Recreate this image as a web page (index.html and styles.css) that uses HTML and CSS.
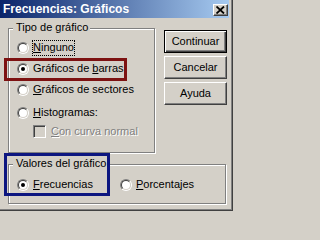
FILE: index.html
```html
<!DOCTYPE html>
<html lang="es">
<head>
<meta charset="utf-8">
<title>Frecuencias: Gráficos</title>
<link rel="stylesheet" href="styles.css">
</head>
<body>
<div class="window">
  <div class="titlebar">
    <span class="title">Frecuencias: Gráficos</span>
    <span class="close"><svg width="9" height="8" viewBox="0 0 9 8"><path d="M0.5 0.5 L8 7.5 M8 0.5 L0.5 7.5" stroke="#000" stroke-width="1.8" fill="none"/></svg></span>
  </div>
  <div class="client">
    <div class="top-row">
      <div class="group group-type">
        <span class="group-label">Tipo de gráfico</span>
        <div class="option"><span class="radio"></span><span class="label focus"><u>N</u>inguno</span></div>
        <div class="option"><span class="radio checked"></span><span class="label">Gráficos de <u>b</u>arras</span></div>
        <div class="option"><span class="radio"></span><span class="label"><u>G</u>ráficos de sectores</span></div>
        <div class="option option-hist"><span class="radio"></span><span class="label"><u>H</u>istogramas:</span></div>
        <div class="option option-check"><span class="checkbox"></span><span class="label disabled"><u>C</u>on curva normal</span></div>
      </div>
      <div class="buttons">
        <div class="btn btn-default">Continuar</div>
        <div class="btn">Cancelar</div>
        <div class="btn">Ayuda</div>
      </div>
    </div>
    <div class="group group-values">
      <span class="group-label">Valores del gráfico</span>
      <div class="values-row">
        <div class="option option-first"><span class="radio checked"></span><span class="label"><u>F</u>recuencias</span></div>
        <div class="option"><span class="radio"></span><span class="label"><u>P</u>orcentajes</span></div>
      </div>
    </div>
  </div>
  <div class="mark mark-red"></div>
  <div class="mark mark-blue"></div>
</div>
</body>
</html>
```
FILE: styles.css
```css
html, body {
  margin: 0;
  padding: 0;
  background: #d4d0c8;
}

body {
  width: 233px;
  height: 211px;
  overflow: hidden;
  font-family: "Liberation Sans", Arial, sans-serif;
  font-size: 11px;
  color: #000;
}

.window {
  position: relative;
  width: 233px;
  height: 211px;
  box-sizing: border-box;
  padding-right: 4px;
  background: #d4d0c8;
  box-shadow: inset -1px -1px 0 #404040, inset -2px -2px 0 #808080;
  display: flex;
  flex-direction: column;
}

.titlebar {
  height: 18px;
  display: flex;
  align-items: center;
  justify-content: space-between;
  background: linear-gradient(to right, #0a246a, #a6caf0);
}

.title {
  padding-left: 3px;
  color: #fff;
  font-weight: bold;
  font-size: 12px;
  line-height: 18px;
  white-space: nowrap;
}

.close {
  width: 15px;
  height: 12px;
  margin-right: 1px;
  margin-top: 1px;
  box-sizing: border-box;
  background: #d4d0c8;
  border: 1px solid;
  border-color: #fff #404040 #404040 #fff;
  box-shadow: inset -1px -1px 0 #808080;
  display: flex;
  align-items: center;
  justify-content: center;
}

.close svg {
  display: block;
  margin-left: -1px;
}

.client {
  display: flex;
  flex-direction: column;
}

.top-row {
  display: flex;
  align-items: flex-start;
}

.group {
  position: relative;
  box-sizing: border-box;
  margin-left: 8px;
  border: 1px solid #808080;
  box-shadow: inset 1px 1px 0 #fff, 1px 1px 0 #fff;
}

.group-label {
  position: absolute;
  left: 4px;
  top: -8px;
  padding: 0 2px 0 3px;
  line-height: 13px;
  background: #d4d0c8;
  white-space: nowrap;
}

.group-type {
  width: 147px;
  height: 125px;
  margin-top: 10px;
  padding: 8px 0 0 8px;
  display: flex;
  flex-direction: column;
}

.option {
  display: flex;
  align-items: center;
  height: 21px;
  white-space: nowrap;
}

.option-hist {
  margin-top: 2px;
}

.option-check {
  height: 17px;
  padding-left: 16px;
}

.radio {
  position: relative;
  flex: none;
  width: 12px;
  height: 12px;
  box-sizing: border-box;
  border-radius: 50%;
  border: 1px solid;
  border-color: #808080 #fff #fff #808080;
}

.radio::before {
  content: "";
  position: absolute;
  inset: 0;
  border-radius: 50%;
  border: 1px solid;
  border-color: #404040 #d4d0c8 #d4d0c8 #404040;
  background: #fff;
}

.radio.checked::after {
  content: "";
  position: absolute;
  left: 3px;
  top: 3px;
  width: 4px;
  height: 4px;
  border-radius: 50%;
  background: #000;
}

.checkbox {
  flex: none;
  width: 13px;
  height: 13px;
  box-sizing: border-box;
  border: 1px solid;
  border-color: #808080 #fff #fff #808080;
  box-shadow: inset 1px 1px 0 #404040, inset -1px -1px 0 #d4d0c8;
  background: #d4d0c8;
}

.label {
  margin-left: 4px;
  line-height: 13px;
}

.option-check .label {
  margin-left: 5px;
}

.label u {
  text-decoration: underline;
  text-underline-offset: 1px;
}

.label.focus {
  outline: 1px dotted #000;
  outline-offset: 0;
  padding-bottom: 1px;
}

.label.disabled {
  color: #808080;
  text-shadow: 1px 1px 0 #fff;
}

.buttons {
  margin-left: 9px;
  margin-top: 12px;
  display: flex;
  flex-direction: column;
  gap: 3px;
}

.btn {
  width: 63px;
  height: 23px;
  box-sizing: border-box;
  border: 1px solid;
  border-color: #fff #404040 #404040 #fff;
  box-shadow: inset -1px -1px 0 #808080;
  display: flex;
  align-items: center;
  justify-content: center;
  line-height: 13px;
}

.btn-default {
  border-color: #000;
  box-shadow: inset 1px 1px 0 #fff, inset -1px -1px 0 #404040, inset -2px -2px 0 #808080;
}

.group-values {
  width: 218px;
  height: 40px;
  margin-top: 11px;
  padding: 9px 0 0 8px;
}

.values-row {
  display: flex;
}

.option-first {
  width: 103px;
}

.mark {
  position: absolute;
  box-sizing: border-box;
  border: 3px solid;
  pointer-events: none;
}

.mark-red {
  left: 4px;
  top: 58px;
  width: 123px;
  height: 23px;
  border-color: #7d1212;
}

.mark-blue {
  left: 4px;
  top: 153px;
  width: 106px;
  height: 43px;
  border-color: #0c1680;
}
```
